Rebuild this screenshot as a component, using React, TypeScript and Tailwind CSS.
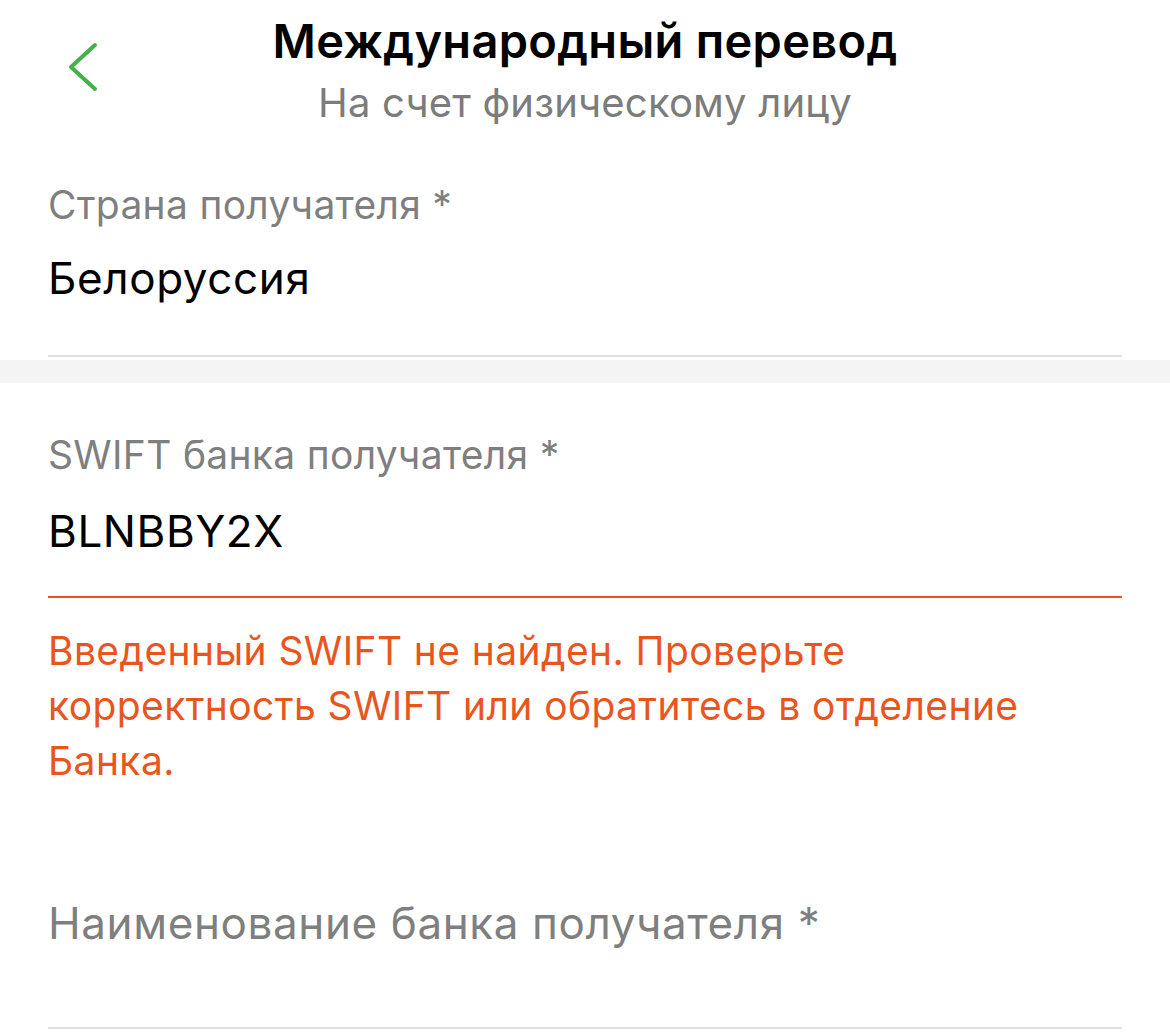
import React from "react";

const font = { fontFamily: "Inter, 'Noto Sans', sans-serif" };

export default function App() {
  return (
    <div className="w-[1170px] h-[1033px] bg-white overflow-hidden" style={font}>
      {/* Header */}
      <div className="relative pt-[13px] flex flex-col items-center">
        <svg
          className="absolute left-[66px] top-[41px]"
          width="34"
          height="52"
          viewBox="0 0 34 52"
          fill="none"
        >
          <path
            d="M29 4 L5 26 L29 48"
            stroke="#43b049"
            strokeWidth="4"
            strokeLinecap="round"
            strokeLinejoin="round"
          />
        </svg>
        <div className="text-[47px] leading-[56px] font-semibold text-black tracking-[0.3px]">
          Международный перевод
        </div>
        <div className="mt-[9px] text-[40px] leading-[50px] text-[#7c7c7c] tracking-[0.2px]">
          На счет физическому лицу
        </div>
      </div>

      {/* Country */}
      <div className="px-[48px]">
        <div className="mt-[55px] text-[39px] leading-[44px] text-[#7f7f7f] tracking-[0.3px]">
          Страна получателя *
        </div>
        <div className="mt-[26px] text-[44px] leading-[50px] text-black tracking-[0.6px]">
          Белоруссия
        </div>
        <div className="mt-[52px] h-[2px] bg-[#dedede]" />
      </div>
      <div className="mt-[3px] h-[23px] bg-[#f4f4f4]" />

      {/* SWIFT */}
      <div className="px-[48px]">
        <div className="mt-[50px] text-[39px] leading-[44px] text-[#7f7f7f] tracking-[0.3px]">
          SWIFT банка получателя *
        </div>
        <div className="mt-[29px] text-[44px] leading-[50px] text-black tracking-[0.6px]">
          BLNBBY2X
        </div>
        <div className="mt-[40px] h-[2px] bg-[#e9561d]" />
        <div className="mt-[25px] text-[39px] leading-[55px] text-[#e9561d] tracking-[0.4px]">
          Введенный SWIFT не найден. Проверьте
          <br />
          корректность SWIFT или обратитесь в отделение
          <br />
          Банка.
        </div>

        {/* Bank name */}
        <div className="mt-[110px] text-[44px] leading-[50px] text-[#7f7f7f] tracking-[0.6px]">
          Наименование банка получателя *
        </div>
        <div className="mt-[79px] h-[2px] bg-[#dedede]" />
      </div>
    </div>
  );
}
